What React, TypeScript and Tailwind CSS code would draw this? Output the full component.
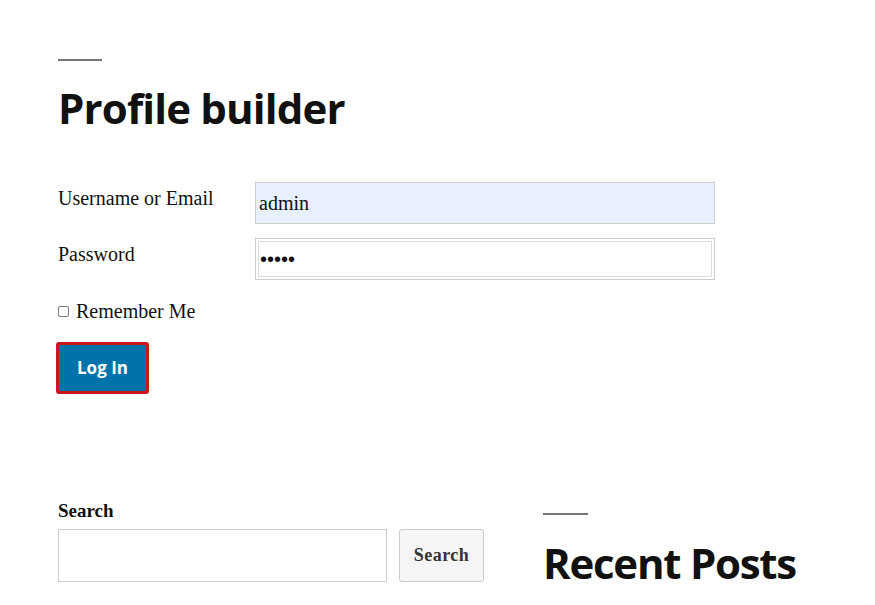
import type {ReactElement} from 'react';

const heading = "font-['Open_Sans',sans-serif] font-bold text-[#111] tracking-[-0.02em]";
const serif = "font-['Liberation_Serif',serif]";

export default function App(): ReactElement {
    return (
        <div className={`min-h-[605px] w-[875px] overflow-hidden bg-white pl-[58px] ${serif} text-[#111]`}>
            <div className="pt-[59px]">
                <div className="h-[2px] w-[44px] bg-[#767676]" />
                <h1 className={`${heading} mt-[17px] text-[42px] leading-[60px]`}>Profile builder</h1>
            </div>

            <form className="mt-[44px] w-[657px]">
                <div className="flex items-start">
                    <label className="w-[197px] pt-[5px] text-[20px] leading-[22px]">Username or Email</label>
                    <input
                        readOnly
                        value="admin"
                        className={`h-[42px] w-[460px] border border-[#ccc] bg-[#e8f0fe] px-[3px] text-[20px] ${serif} outline-none`}
                    />
                </div>
                <div className="mt-[14px] flex items-start">
                    <label className="w-[197px] pt-[5px] text-[20px] leading-[22px]">Password</label>
                    <div className="h-[42px] w-[460px] border border-[#ccc] p-[2px]">
                        <div className="flex h-full items-center border border-[#ddd] px-[1px] font-['Liberation_Sans',sans-serif] text-[20px]">
                            •••••
                        </div>
                    </div>
                </div>
                <div className="mt-[20px] flex items-center">
                    <span className="size-[11px] rounded-[2px] border border-[#777]" />
                    <span className="ml-[7px] text-[20px] leading-[22px]">Remember Me</span>
                </div>
                <button
                    type="button"
                    className="mt-[20px] -ml-[2px] h-[52px] w-[93px] rounded-[3px] border-[3px] border-[#c8161d] bg-[#0073aa] font-['Open_Sans',sans-serif] text-[17px] font-bold text-white"
                >
                    Log In
                </button>
            </form>

            <div className="mt-[106px] flex items-start">
                <div className="w-[426px]">
                    <div className="text-[19px] leading-[22px] font-bold">Search</div>
                    <div className="mt-[7px] flex">
                        <div className="h-[53px] w-[329px] border border-[#ccc]" />
                        <button
                            type="button"
                            className="ml-[12px] h-[53px] w-[85px] rounded-[3px] border border-[#ccc] bg-[#f5f5f5] text-[18px] font-bold tracking-[0.5px] text-[#333]"
                        >
                            Search
                        </button>
                    </div>
                </div>
                <div className="ml-[59px] pt-[13px]">
                    <div className="h-[2px] w-[45px] bg-[#767676]" />
                    <h2 className={`${heading} mt-[18px] text-[42px] leading-[60px] tracking-[-0.03em]`}>Recent Posts</h2>
                </div>
            </div>
        </div>
    );
}
